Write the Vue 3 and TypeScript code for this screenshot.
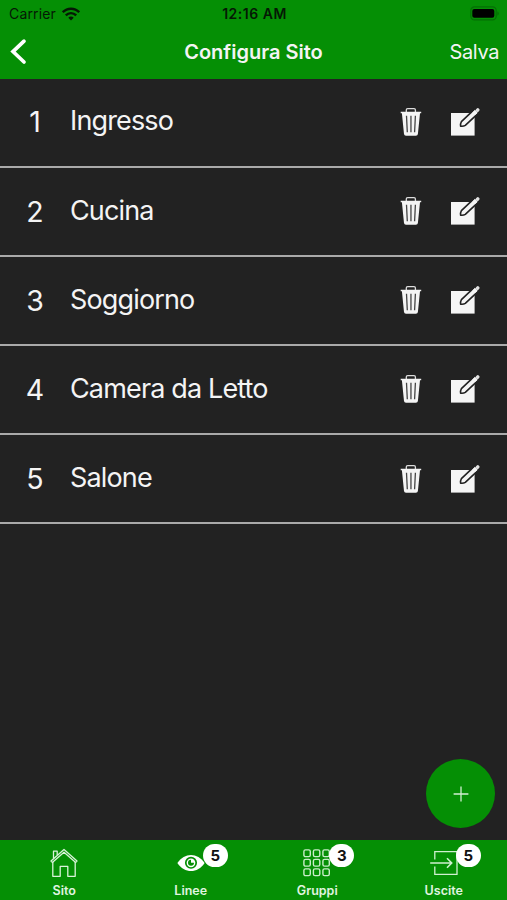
<script setup lang="ts">
interface Tab {
  label: string
  icon: 'home' | 'eye' | 'grid' | 'exit'
  badge?: number
}

const rooms: string[] = ['Ingresso', 'Cucina', 'Soggiorno', 'Camera da Letto', 'Salone']

const tabs: Tab[] = [
  { label: 'Sito', icon: 'home' },
  { label: 'Linee', icon: 'eye', badge: 5 },
  { label: 'Gruppi', icon: 'grid', badge: 3 },
  { label: 'Uscite', icon: 'exit', badge: 5 },
]

const cells = [0.7, 10.2, 19.7]
</script>

<template>
  <div class="screen">
    <header class="top">
      <div class="status">
        <div class="carrier">
          <span>Carrier</span>
          <svg class="wifi" width="18" height="14" viewBox="0 0 18 14" fill="none" stroke="#051805" stroke-width="2.4">
            <path d="M0.8 5.2C5.3 0.5 12.7 0.5 17.2 5.2" />
            <path d="M3.8 8.4C6.7 5.4 11.3 5.4 14.2 8.4" />
            <path d="M6.3 10.7C7.8 9.2 10.2 9.2 11.7 10.7L9 13.6Z" fill="#051805" stroke="none" />
          </svg>
        </div>
        <span class="clock">12:16 AM</span>
        <svg class="battery" width="30" height="15" viewBox="0 0 30 15">
          <rect x="0.8" y="0.9" width="25.4" height="13" rx="3.6" fill="none" stroke="#046f04" stroke-width="1.2" />
          <rect x="2.3" y="3" width="22" height="8.8" rx="2" fill="#000" />
          <path d="M27.4 5.2C29.3 6 29.3 8.9 27.4 9.7Z" fill="#046f04" />
        </svg>
      </div>
      <nav class="bar">
        <button class="back" aria-label="Indietro">
          <svg width="20" height="28" viewBox="0 0 20 28" fill="none" stroke="#fff" stroke-width="3.7" stroke-linecap="round">
            <path d="M16 3.2L5 13.6L16 24" />
          </svg>
        </button>
        <h1>Configura Sito</h1>
        <button class="save">Salva</button>
      </nav>
    </header>

    <main>
      <ul class="list">
        <li v-for="(room, i) in rooms" :key="room" class="row">
          <span class="num">{{ i + 1 }}</span>
          <span class="name">{{ room }}</span>
          <div class="actions">
            <svg class="trash" width="22" height="30" viewBox="0 0 22 30">
              <path d="M6.3 5V3Q6.3 1.6 7.7 1.6H14Q15.4 1.6 15.4 3V5" fill="none" stroke="#ddd" stroke-width="1.3" />
              <path d="M0.7 4.7H21.2V6.3H20L17.9 27Q17.7 28.8 15.9 28.8H6Q4.2 28.8 4 27L1.9 6.3H0.7Z" fill="#f4f4f4" />
              <path d="M6.5 8.8L7.3 25.3M10.95 8.8V25.3M15.4 8.8L14.6 25.3" stroke="#444" stroke-width="1.3" fill="none" />
            </svg>
            <svg class="edit" width="30" height="30" viewBox="0 0 30 30">
              <path d="M1 6H24.6V28.6H1Z" fill="#f5f5f5" />
              <path d="M24.6 2.2L11.4 14.6Q10.2 16.6 10.6 19.2Q13.4 19.6 15.3 18.4L28.4 6.2" fill="#f5f5f5" stroke="#222" stroke-width="1.6" stroke-linejoin="round" />
              <path d="M23.6 1.4L29.2 7.2V0H23.6Z" fill="#222" />
              <path d="M23.6 6.9L26.3 4.4" stroke="#f5f5f5" stroke-width="3.6" />
              <path d="M27.5 3.2L27.8 2.9" stroke="#e2e2e2" stroke-width="3.4" stroke-linecap="round" />
            </svg>
          </div>
        </li>
      </ul>
      <button class="add" aria-label="Aggiungi">
        <svg width="16" height="16" viewBox="0 0 16 16" stroke="#d2efd2" stroke-width="1.3">
          <path d="M8 0.6V15.4M0.6 8H15.4" />
        </svg>
      </button>
    </main>

    <footer class="tabs">
      <div v-for="tab in tabs" :key="tab.label" class="tab">
        <div class="glyph">
          <svg v-if="tab.icon === 'home'" width="28" height="30" viewBox="0 0 28 30" fill="none" stroke="#d9f3d9" stroke-width="1.3" stroke-linejoin="round">
            <path d="M1 13L14 1.5L27 13L25.7 14.4L14 4.2L2.3 14.4Z" />
            <path d="M2.8 14V28.3H10.2V18.4H17.8V28.3H25.2V14" />
            <path d="M3.5 10.5V3.2H7.2V7" />
          </svg>
          <svg v-else-if="tab.icon === 'eye'" width="28" height="30" viewBox="0 0 28 30">
            <path d="M0.4 14.9C7.5 4.2 20.5 4.2 27.6 14.9C20.5 25.6 7.5 25.6 0.4 14.9Z" fill="#fff" />
            <circle cx="14" cy="14.8" r="5.2" fill="none" stroke="#058f05" stroke-width="1.7" />
            <path d="M14 11.8V14.8H17A3 3 0 1 1 14 11.8Z" fill="#058f05" />
          </svg>
          <svg v-else-if="tab.icon === 'grid'" width="28" height="30" viewBox="0 0 28 30" fill="none" stroke="#c9edc9" stroke-width="1.4">
            <template v-for="y in cells" :key="y">
              <rect v-for="x in cells" :key="x" :x="x + 0.2" :y="y + 1.2" width="6.4" height="6.7" rx="1.6" />
            </template>
          </svg>
          <svg v-else width="28" height="30" viewBox="0 0 28 30" fill="none" stroke="#d0f0d0" stroke-width="1.3">
            <path d="M4.8 11.5V3.6H27V26.3H4.8V18.5" />
            <path d="M0.2 15H21.5M17 10.3L21.7 15L17 19.7" stroke-width="1.6" />
          </svg>
          <span v-if="tab.badge" class="badge">{{ tab.badge }}</span>
        </div>
        <span class="label">{{ tab.label }}</span>
      </div>
    </footer>
  </div>
</template>

<style>
body {
  margin: 0;
  background: #222;
}
</style>

<style scoped>
.screen {
  display: flex;
  flex-direction: column;
  height: 900px;
  background: #222;
  color: #f4f4f4;
  font-family: Inter, "Liberation Sans", sans-serif;
}
svg {
  display: block;
}
button {
  margin: 0;
  padding: 0;
  border: 0;
  background: none;
  color: inherit;
  font: inherit;
}
.top {
  height: 79px;
  flex: none;
  background: #058f05;
}
.status {
  display: grid;
  grid-template-columns: 1fr auto 1fr;
  align-items: center;
  height: 27px;
  padding: 0 7px 0 9px;
  color: #051805;
}
.carrier {
  display: flex;
  align-items: center;
  gap: 6px;
  font-size: 14px;
  letter-spacing: 0.15px;
}
.clock {
  font-size: 14px;
  font-weight: 600;
  letter-spacing: 0.5px;
}
.battery {
  justify-self: end;
}
.bar {
  display: grid;
  grid-template-columns: 1fr auto 1fr;
  align-items: center;
  height: 50px;
  padding: 0 8px;
}
.back {
  justify-self: start;
}
h1 {
  margin: 0;
  font-size: 20px;
  font-weight: 600;
}
.save {
  justify-self: end;
  font-size: 20px;
  letter-spacing: -0.4px;
}
main {
  flex: 1;
  position: relative;
}
.list {
  margin: -0.6px 0 0;
  padding: 0;
  list-style: none;
}
.row {
  box-sizing: border-box;
  display: grid;
  grid-template-columns: 70px 1fr auto;
  align-items: center;
  height: 89.15px;
  padding-right: 27px;
  border-bottom: 2px solid #aaa;
}
.num {
  text-align: center;
  font-size: 28.5px;
  font-weight: 400;
}
.name {
  padding-bottom: 2px;
  font-size: 27px;
  font-weight: 400;
  letter-spacing: -0.85px;
}
.actions {
  display: flex;
  gap: 28px;
}
.add {
  position: absolute;
  right: 12px;
  bottom: 12px;
  display: grid;
  place-items: center;
  width: 69px;
  height: 69px;
  border-radius: 50%;
  background: #058f05;
}
.tabs {
  display: grid;
  grid-template-columns: repeat(4, 1fr);
  flex: none;
  height: 60px;
  padding-left: 1px;
  background: #058f05;
}
.tab {
  display: flex;
  flex-direction: column;
  align-items: center;
  padding-top: 8px;
}
.glyph {
  position: relative;
}
.badge {
  position: absolute;
  left: 26px;
  top: -4px;
  width: 25px;
  height: 23px;
  border-radius: 12px;
  background: #fff;
  color: #111;
  font-size: 15px;
  font-weight: 700;
  line-height: 23px;
  text-align: center;
}
.label {
  margin-top: 5px;
  color: #e0f5e0;
  font-size: 12.5px;
  font-weight: 600;
  line-height: 16px;
}
</style>
